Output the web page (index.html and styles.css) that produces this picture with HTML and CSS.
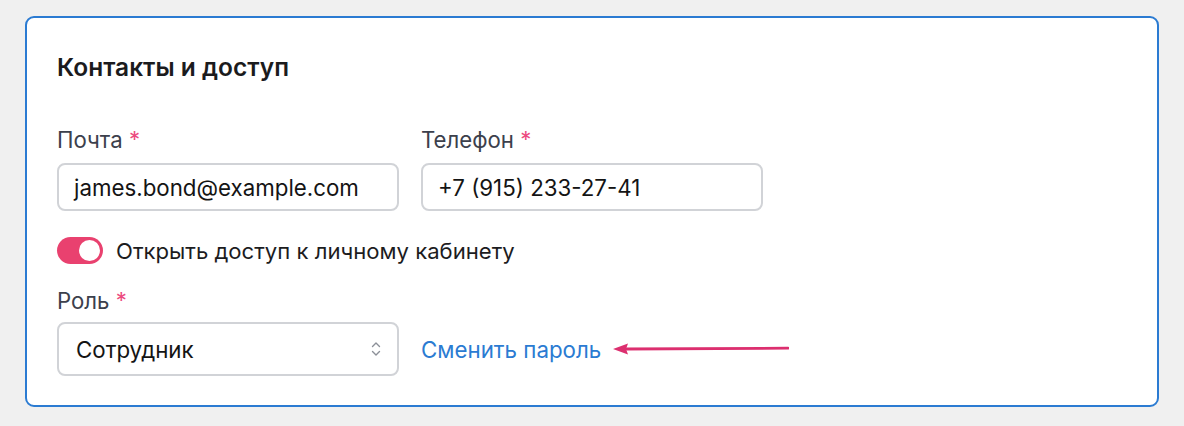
FILE: index.html
```html
<!DOCTYPE html>
<html lang="ru">
<head>
<meta charset="utf-8">
<title>Контакты и доступ</title>
<link rel="stylesheet" href="styles.css">
</head>
<body>
<section class="card">
  <h2 class="card-title">Контакты и доступ</h2>
  <div class="row">
    <div class="field">
      <label class="label">Почта <span class="req">*</span></label>
      <div class="input">james.bond@example.com</div>
    </div>
    <div class="field">
      <label class="label">Телефон <span class="req">*</span></label>
      <div class="input">+7 (915) 233-27-41</div>
    </div>
  </div>
  <div class="switch-row">
    <span class="switch"><span class="knob"></span></span>
    <span class="switch-text">Открыть доступ к личному кабинету</span>
  </div>
  <div class="field role">
    <label class="label">Роль <span class="req">*</span></label>
    <div class="select-row">
      <div class="select">
        <span>Сотрудник</span>
        <svg class="chev" width="10" height="16" viewBox="0 0 10 16" fill="none" stroke="#8c9098" stroke-width="1.4" stroke-linecap="round" stroke-linejoin="round">
          <path d="M1.5 5.5 L5 2 L8.5 5.5"/>
          <path d="M1.5 10.5 L5 14 L8.5 10.5"/>
        </svg>
      </div>
      <a class="link" href="#">Сменить пароль</a>
      <svg class="arrow" width="176" height="14" viewBox="0 0 176 14">
        <path d="M12 7 L175 6.2" stroke="#dc2f6f" stroke-width="2.8" stroke-linecap="round" fill="none"/>
        <path d="M0 7 L15 1.5 L13 7 L15 12.5 Z" fill="#dc2f6f"/>
      </svg>
    </div>
  </div>
</section>
</body>
</html>
```
FILE: styles.css
```css
html, body {
  margin: 0;
  padding: 0;
}
body {
  background: #f0f0f0;
  font-family: "Inter", "Noto Sans", sans-serif;
  padding: 16px 25px 19px 25px;
}
.card {
  background: #fff;
  border: 2px solid #2b7bd2;
  border-radius: 9px;
  padding: 35px 30px 30px 30px;
  height: 391px;
  box-sizing: border-box;
}
.card-title {
  margin: 0;
  font-size: 24.5px;
  line-height: 28px;
  font-weight: 600;
  color: #1b1b1d;
}
.row {
  display: flex;
  gap: 22px;
  margin-top: 47px;
}
.field {
  display: flex;
  flex-direction: column;
}
.label {
  font-size: 22.2px;
  line-height: 24px;
  color: #3c404c;
  margin-bottom: 11px;
}
.req {
  color: #ec4b80;
}
.input {
  width: 342px;
  height: 48px;
  box-sizing: border-box;
  border: 2px solid #d1d3d7;
  border-radius: 8px;
  padding: 0 15px;
  display: flex;
  align-items: center;
  font-size: 22.3px;
  color: #141414;
}
.switch-row {
  display: flex;
  align-items: center;
  gap: 13px;
  margin-top: 26px;
  height: 27px;
}
.switch {
  width: 46px;
  height: 27px;
  border-radius: 14px;
  background: #e9416f;
  display: flex;
  align-items: center;
  justify-content: flex-end;
  padding: 0 3px;
  box-sizing: border-box;
}
.knob {
  width: 21px;
  height: 21px;
  border-radius: 50%;
  background: #fff;
}
.switch-text {
  font-size: 22.1px;
  color: #1c1c1e;
}
.role {
  margin-top: 25px;
}
.role .label {
  margin-bottom: 9px;
}
.select-row {
  display: flex;
  align-items: center;
  gap: 22px;
}
.select {
  width: 342px;
  height: 54px;
  box-sizing: border-box;
  border: 2px solid #d1d3d7;
  border-radius: 8px;
  padding: 0 16px 0 17px;
  display: flex;
  align-items: center;
  justify-content: space-between;
  font-size: 22.3px;
  color: #141414;
}
.chev {
  display: block;
}
.link {
  color: #2b7bd2;
  text-decoration: none;
  font-size: 22.3px;
}
.arrow {
  display: block;
  margin-left: -10px;
}
```
